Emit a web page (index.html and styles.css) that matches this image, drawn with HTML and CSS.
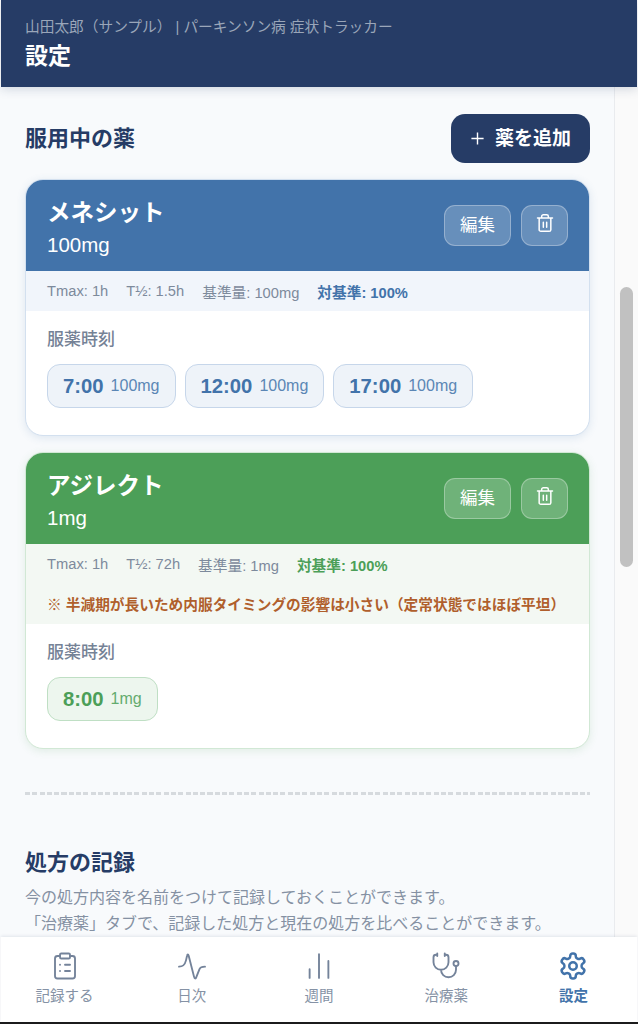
FILE: index.html
```html
<!DOCTYPE html>
<html lang="ja">
<head>
<meta charset="utf-8">
<title>設定</title>
<link rel="stylesheet" href="styles.css">
</head>
<body>
<div class="app">
  <header class="topbar">
    <div class="subtitle">山田太郎（サンプル） | パーキンソン病 症状トラッカー</div>
    <h1 class="page-title">設定</h1>
  </header>
  <div class="scroller">
    <main class="content">
      <div class="section-head">
        <h2 class="section-title">服用中の薬</h2>
        <button class="add-btn"><svg class="plus" viewBox="0 0 16 16"><path d="M8 1.5v13M1.5 8h13"/></svg>薬を追加</button>
      </div>

      <article class="card card-blue">
        <div class="card-head">
          <div class="card-name">
            <div class="drug">メネシット</div>
            <div class="dose">100mg</div>
          </div>
          <div class="actions">
            <button class="act act-edit">編集</button>
            <button class="act act-del"><svg class="trash" viewBox="0 0 24 24"><path d="M3 6h18M19 6v14c0 1-1 2-2 2H7c-1 0-2-1-2-2V6M8 6V4c0-1 1-2 2-2h4c1 0 2 1 2 2v2M10 11v6M14 11v6"/></svg></button>
          </div>
        </div>
        <div class="stats">
          <div class="stat-row">
            <span class="stat">Tmax: 1h</span><span class="stat">T½: 1.5h</span><span class="stat">基準量: 100mg</span><span class="stat ratio">対基準: 100%</span>
          </div>
        </div>
        <div class="card-body">
          <div class="times-label">服薬時刻</div>
          <div class="chips">
            <div class="chip"><b>7:00</b><span>100mg</span></div>
            <div class="chip"><b>12:00</b><span>100mg</span></div>
            <div class="chip"><b>17:00</b><span>100mg</span></div>
          </div>
        </div>
      </article>

      <article class="card card-green">
        <div class="card-head">
          <div class="card-name">
            <div class="drug">アジレクト</div>
            <div class="dose">1mg</div>
          </div>
          <div class="actions">
            <button class="act act-edit">編集</button>
            <button class="act act-del"><svg class="trash" viewBox="0 0 24 24"><path d="M3 6h18M19 6v14c0 1-1 2-2 2H7c-1 0-2-1-2-2V6M8 6V4c0-1 1-2 2-2h4c1 0 2 1 2 2v2M10 11v6M14 11v6"/></svg></button>
          </div>
        </div>
        <div class="stats">
          <div class="stat-row">
            <span class="stat">Tmax: 1h</span><span class="stat">T½: 72h</span><span class="stat">基準量: 1mg</span><span class="stat ratio">対基準: 100%</span>
          </div>
          <div class="note">※ 半減期が長いため内服タイミングの影響は小さい（定常状態ではほぼ平坦）</div>
        </div>
        <div class="card-body">
          <div class="times-label">服薬時刻</div>
          <div class="chips">
            <div class="chip"><b>8:00</b><span>1mg</span></div>
          </div>
        </div>
      </article>

      <div class="divider"></div>

      <h2 class="section-title record-title">処方の記録</h2>
      <p class="record-text">今の処方内容を名前をつけて記録しておくことができます。<br>「治療薬」タブで、記録した処方と現在の処方を比べることができます。</p>
    </main>
    <div class="gutter"><div class="thumb"></div></div>
  </div>
  <nav class="tabs">
    <div class="tab">
      <svg class="tab-icon" viewBox="0 0 24 24"><rect x="8" y="2" width="8" height="4" rx="1"/><path d="M16 4h2a2 2 0 0 1 2 2v14a2 2 0 0 1-2 2H6a2 2 0 0 1-2-2V6a2 2 0 0 1 2-2h2M12 11h4M12 16h4M8 11h.01M8 16h.01"/></svg>
      <span>記録する</span>
    </div>
    <div class="tab">
      <svg class="tab-icon" viewBox="0 0 24 24"><path d="M1.6 12.5c3 0 4.600-1 5.600-5l.8-3.500c.3-1.600 1-1.600 1.400 0l4.200 16.500c.5 2 1.400 2 2 0L18 14.500c.6-1.500 1.600-2 4.400-2"/></svg>
      <span>日次</span>
    </div>
    <div class="tab">
      <svg class="tab-icon" viewBox="0 0 24 24"><path d="M4.500 21.500v-7M12 21.500V2.500M19.500 21.500V8"/></svg>
      <span>週間</span>
    </div>
    <div class="tab">
      <svg class="tab-icon" viewBox="0 0 24 24"><path d="M11 2v2M5 2v2M5 3H4a2 2 0 0 0-2 2v4a6 6 0 0 0 12 0V5a2 2 0 0 0-2-2h-1M8 15a6 6 0 0 0 12 0v-3"/><circle cx="20" cy="10" r="2"/></svg>
      <span>治療薬</span>
    </div>
    <div class="tab tab-active">
      <svg class="tab-icon" viewBox="0 0 24 24"><path d="M12.220 2h-.44a2 2 0 0 0-2 2v.18a2 2 0 0 1-1 1.730l-.43.25a2 2 0 0 1-2 0l-.15-.08a2 2 0 0 0-2.730.73l-.22.38a2 2 0 0 0 .73 2.730l.15.1a2 2 0 0 1 1 1.720v.51a2 2 0 0 1-1 1.740l-.15.09a2 2 0 0 0-.73 2.730l.22.38a2 2 0 0 0 2.730.73l.15-.08a2 2 0 0 1 2 0l.43.25a2 2 0 0 1 1 1.730V20a2 2 0 0 0 2 2h.44a2 2 0 0 0 2-2v-.18a2 2 0 0 1 1-1.730l.43-.25a2 2 0 0 1 2 0l.15.08a2 2 0 0 0 2.730-.73l.22-.39a2 2 0 0 0-.73-2.730l-.15-.08a2 2 0 0 1-1-1.740v-.5a2 2 0 0 1 1-1.740l.15-.09a2 2 0 0 0 .73-2.730l-.22-.38a2 2 0 0 0-2.730-.73l-.15.08a2 2 0 0 1-2 0l-.43-.25a2 2 0 0 1-1-1.730V4a2 2 0 0 0-2-2z"/><circle cx="12" cy="12" r="3"/></svg>
      <span>設定</span>
    </div>
  </nav>
  <div class="edge"></div>
</div>
</body>
</html>
```
FILE: styles.css
```css
* { box-sizing: border-box; }
html, body { margin: 0; height: 100%; }
body {
  font-family: "Liberation Sans", "Noto Sans CJK JP", sans-serif;
  background: #f8fafc;
  overflow: hidden;
}
.app { height: 1024px; display: flex; flex-direction: column; padding-left: 1px; padding-right: 1px; background: #fff; }
.topbar {
  height: 87px;
  flex: none;
  background: #263c66;
  padding: 17px 24px 0;
  box-shadow: 0 2px 10px rgba(30, 50, 90, .18);
  position: relative;
  z-index: 2;
}
.subtitle { font-size: 14.700px; line-height: 20px; color: #9aa6b9; white-space: nowrap; }
.page-title { margin: 3px 0 0; font-size: 23px; line-height: 32px; font-weight: 700; color: #fff; }

.scroller { flex: 1; min-height: 0; display: flex; overflow: hidden; background: #f8fafc; margin: 0 -1px; }
.content { width: 614px; flex: none; padding: 27px 24px 0 25px; overflow: hidden; }
.gutter { flex: 1; border-left: 1px solid #e9ebee; background: #fafafa; padding: 200px 5px 0 5px; }
.thumb { width: 13px; height: 280px; border-radius: 7px; background: #c1c1c1; }

.section-head { display: flex; align-items: center; justify-content: space-between; height: 49px; margin-bottom: 16px; }
.section-title { margin: 0; font-size: 22px; line-height: 30px; font-weight: 700; color: #263c66; }
.add-btn {
  width: 139px; height: 49px; border: 0; border-radius: 14px;
  background: #263c66; color: #fff; font: 700 19px/1 "Liberation Sans", "Noto Sans CJK JP", sans-serif;
  display: flex; align-items: center; justify-content: center; gap: 10px; padding: 0;
}
.plus { width: 15px; height: 15px; fill: none; stroke: #fff; stroke-width: 1.500; }

.card { margin: 0 0 16px; border-radius: 18px; overflow: hidden; background: #fff; border: 1px solid; }
.card-blue { border-color: #d3e0ef; box-shadow: 0 2px 8px rgba(66, 115, 170, .14); }
.card-green { border-color: #d1e8d5; box-shadow: 0 2px 8px rgba(76, 159, 88, .14); }
.card-head { display: flex; justify-content: space-between; align-items: flex-start; padding: 16px 21px 0; height: 91px; color: #fff; }
.card-blue .card-head { background: #4273aa; }
.card-green .card-head { background: #4c9f58; }
.drug { font-size: 23.500px; line-height: 34px; font-weight: 700; }
.dose { font-size: 20.500px; line-height: 26px; margin-top: 2px; }
.actions { display: flex; gap: 10px; margin-top: 9px; }
.act {
  height: 41px; border-radius: 11px; border: 1.500px solid rgba(255, 255, 255, .3);
  background: rgba(255, 255, 255, .2); color: #fff; padding: 0;
  font: 400 17.500px/1 "Liberation Sans", "Noto Sans CJK JP", sans-serif;
  display: flex; align-items: center; justify-content: center;
}
.act-edit { width: 67px; }
.act-del { width: 47px; padding-bottom: 6px; }
.trash { width: 20px; height: 20px; fill: none; stroke: #fff; stroke-width: 1.800; stroke-linecap: round; stroke-linejoin: round; }

.stats { padding: 0 21px; }
.card-blue .stats { background: #f1f5fb; }
.card-green .stats { background: #f3f8f3; }
.stat-row { display: flex; gap: 18px; height: 40px; align-items: center; font-size: 14.700px; color: #7d8a9c; }
.ratio { font-weight: 700; }
.card-blue .ratio { color: #4273aa; }
.card-green .ratio { color: #4c9f58; }
.note { height: 40px; line-height: 42px; font-size: 14.700px; font-weight: 700; color: #b05f2c; white-space: nowrap; }
.card-body { padding: 15px 21px 27px; }
.times-label { font-size: 17px; line-height: 28px; font-weight: 500; color: #758296; margin-bottom: 10px; }
.chips { display: flex; gap: 9px; }
.chip {
  height: 44px; padding: 0 15px; border-radius: 13px; border: 1.500px solid;
  display: flex; align-items: center; gap: 7px;
}
.chip b { font-size: 20.300px; }
.chip span { font-size: 16px; opacity: .85; }
.card-blue .chip { background: #eef3f9; border-color: #c6d6ea; color: #4273aa; }
.card-green .chip { background: #edf6ee; border-color: #bfdfc4; color: #4c9f58; }

.divider { height: 3px; margin: 43px 0 0; background: repeating-linear-gradient(90deg, #d6dade 0 5px, transparent 5px 7.300px); }
.record-title { margin-top: 53px; }
.record-text { margin: 7px 0 0; font-size: 16px; line-height: 26px; color: #8591a3; white-space: nowrap; }

.tabs { height: 85px; flex: none; display: flex; background: #fff; position: relative; z-index: 2; box-shadow: 0 -1px 3px rgba(30, 50, 90, .1); }
.tab { flex: 1; display: flex; flex-direction: column; align-items: center; padding-top: 14px; font-size: 14.500px; line-height: 20px; color: #8592a5; }
.tab span { margin-top: 5px; }
.tab-icon { width: 30px; height: 30px; fill: none; stroke: #74839a; stroke-width: 1.500; stroke-linecap: round; stroke-linejoin: round; }
.tab-active { color: #4273aa; font-weight: 700; }
.tab-active .tab-icon { stroke: #4273aa; stroke-width: 2; }
.edge { height: 2px; flex: none; background: #1c1c1c; margin: 0 -1px; }
```
